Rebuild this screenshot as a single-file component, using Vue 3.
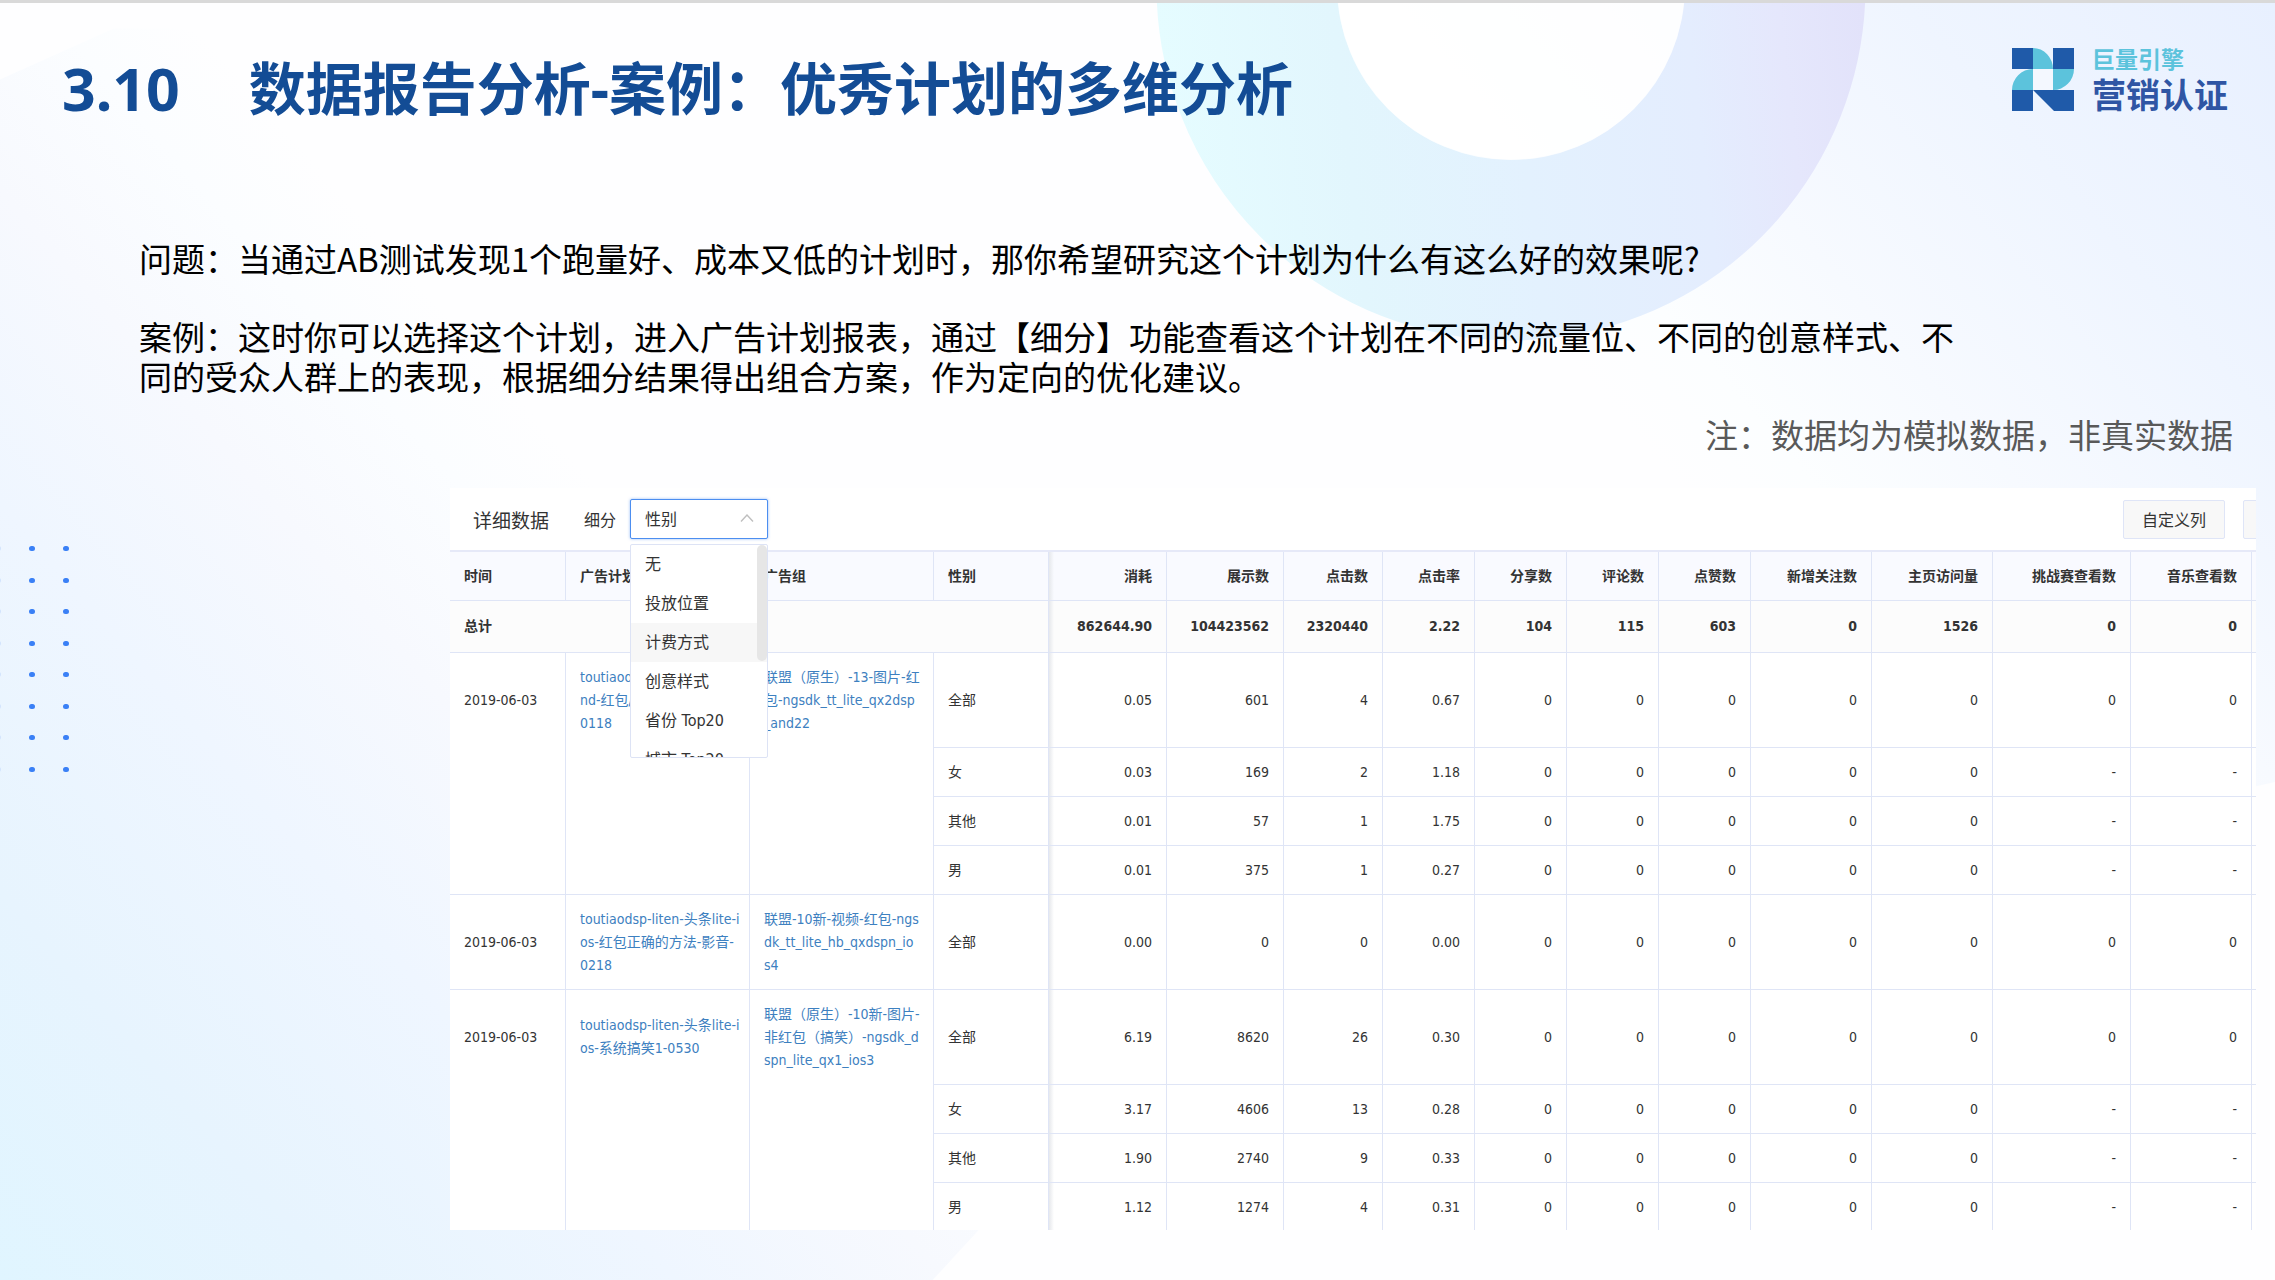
<script setup>
const columns = [
  { name: '时间', width: 116 },
  { name: '广告计划', width: 184 },
  { name: '广告组', width: 184 },
  { name: '性别', width: 115 },
  { name: '消耗', width: 118, number: true },
  { name: '展示数', width: 117, number: true },
  { name: '点击数', width: 99, number: true },
  { name: '点击率', width: 92, number: true },
  { name: '分享数', width: 92, number: true },
  { name: '评论数', width: 92, number: true },
  { name: '点赞数', width: 92, number: true },
  { name: '新增关注数', width: 121, number: true },
  { name: '主页访问量', width: 121, number: true },
  { name: '挑战赛查看数', width: 138, number: true },
  { name: '音乐查看数', width: 121, number: true },
]

const totals = ['862644.90', '104423562', '2320440', '2.22', '104', '115', '603', '0', '1526', '0', '0']

const zeros = ['0', '0', '0', '0', '0', '0', '0']
const dashes = ['0', '0', '0', '0', '0', '-', '-']

const groups = [
  {
    date: '2019-06-03',
    plan: ['toutiaodsp-liten-', 'nd-红包/', '0118'],
    group: ['联盟（原生）-13-图片-红', '包-ngsdk_tt_lite_qx2dsp', '_and22'],
    rows: [
      { label: '全部', values: ['0.05', '601', '4', '0.67', ...zeros] },
      { label: '女', values: ['0.03', '169', '2', '1.18', ...dashes] },
      { label: '其他', values: ['0.01', '57', '1', '1.75', ...dashes] },
      { label: '男', values: ['0.01', '375', '1', '0.27', ...dashes] },
    ],
  },
  {
    date: '2019-06-03',
    plan: ['toutiaodsp-liten-头条lite-i', 'os-红包正确的方法-影音-', '0218'],
    group: ['联盟-10新-视频-红包-ngs', 'dk_tt_lite_hb_qxdspn_io', 's4'],
    rows: [{ label: '全部', values: ['0.00', '0', '0', '0.00', ...zeros] }],
  },
  {
    date: '2019-06-03',
    plan: ['toutiaodsp-liten-头条lite-i', 'os-系统搞笑1-0530'],
    group: ['联盟（原生）-10新-图片-', '非红包（搞笑）-ngsdk_d', 'spn_lite_qx1_ios3'],
    rows: [
      { label: '全部', values: ['6.19', '8620', '26', '0.30', ...zeros] },
      { label: '女', values: ['3.17', '4606', '13', '0.28', ...dashes] },
      { label: '其他', values: ['1.90', '2740', '9', '0.33', ...dashes] },
      { label: '男', values: ['1.12', '1274', '4', '0.31', ...dashes] },
    ],
  },
]

const options = ['无', '投放位置', '计费方式', '创意样式', '省份 Top20', '城市 Top20']
const hovered = '计费方式'
</script>

<template>
  <div class="slide">
    <svg class="ring" width="710" height="338" viewBox="0 0 710 338" aria-hidden="true">
      <defs>
        <linearGradient id="ring-fill" gradientUnits="userSpaceOnUse" x1="0" y1="20" x2="700" y2="-60">
          <stop offset="0" stop-color="#e5fcff" />
          <stop offset="0.25" stop-color="#e2f6fd" />
          <stop offset="0.5" stop-color="#e3f1fe" />
          <stop offset="0.75" stop-color="#e4edfe" />
          <stop offset="0.88" stop-color="#e5e7fc" />
          <stop offset="1" stop-color="#e2e2fa" />
        </linearGradient>
      </defs>
      <circle cx="355" cy="-17" r="264" fill="none" stroke="url(#ring-fill)" stroke-width="181" />
      <circle cx="355" cy="-17" r="174" fill="#fff" fill-opacity="0.8" />
    </svg>

    <header class="head">
      <h1 class="title"><span class="index">3.10</span><span>数据报告分析-案例：优秀计划的多维分析</span></h1>
      <div class="brand">
        <svg class="mark" width="64" height="64" viewBox="0 0 64 64" aria-hidden="true">
          <path fill="#1f5aa9" d="M1 1h21v21H1zM42 1h21v21H42zM1 43h21v21H1zM22 43h41v21H43z" />
          <path fill="#5cc3dc" d="M22 1a20 21 0 0 1 20 21H22zM22 22v21H1a21 21 0 0 1 21-21zM42 22h21a21 21 0 0 1-21 21z" />
          <path fill="#f4f8ff" d="M22 22h20v21H22z" />
        </svg>
        <div class="words">
          <span class="small">巨量引擎</span>
          <span class="large">营销认证</span>
        </div>
      </div>
    </header>

    <section class="copy">
      <p>问题：当通过AB测试发现1个跑量好、成本又低的计划时，那你希望研究这个计划为什么有这么好的效果呢?</p>
      <p>案例：这时你可以选择这个计划，进入广告计划报表，通过【细分】功能查看这个计划在不同的流量位、不同的创意样式、不同的受众人群上的表现，根据细分结果得出组合方案，作为定向的优化建议。</p>
    </section>
    <p class="note">注：数据均为模拟数据，非真实数据</p>

    <div class="body">
      <div class="dots" aria-hidden="true"><i v-for="n in 24" :key="n" :class="{ faint: n % 3 === 1 }"></i></div>

      <section class="panel">
        <div class="toolbar">
          <h2>详细数据</h2>
          <label for="split">细分</label>
          <div class="picker">
            <select id="split"><option>性别</option></select>
            <svg class="caret" width="14" height="8" viewBox="0 0 14 8" aria-hidden="true">
              <path d="M1 7.500 7 1l6 6.500" fill="none" stroke="#bfbfbf" stroke-width="1.400" />
            </svg>
            <div class="menu">
              <ul>
                <li v-for="o in options" :key="o" :class="{ on: o === hovered }">{{ o }}</li>
              </ul>
              <span class="thumb"></span>
            </div>
          </div>
          <div class="actions">
            <button type="button">自定义列</button>
            <button type="button" aria-label="更多"></button>
          </div>
        </div>

        <table>
          <colgroup>
            <col v-for="c in columns" :key="c.name" :style="{ width: c.width + 'px' }" />
            <col />
          </colgroup>
          <thead>
            <tr>
              <th v-for="(c, i) in columns" :key="c.name" :class="{ num: c.number, edge: i === 4 }">{{ c.name }}</th>
              <th></th>
            </tr>
          </thead>
          <tbody>
            <tr class="total">
              <td colspan="4">总计</td>
              <td v-for="(t, i) in totals" :key="i" class="num" :class="{ edge: i === 0 }">{{ t }}</td>
              <td></td>
            </tr>
            <template v-for="(g, gi) in groups" :key="gi">
              <tr v-for="(r, ri) in g.rows" :key="gi + r.label" :class="{ tall: ri === 0 }">
                <template v-if="ri === 0">
                  <td :rowspan="g.rows.length" class="top"><div class="lead">{{ g.date }}</div></td>
                  <td :rowspan="g.rows.length" class="top">
                    <div class="lead"><a href="#"><span v-for="l in g.plan" :key="l">{{ l }}</span></a></div>
                  </td>
                  <td :rowspan="g.rows.length" class="top">
                    <div class="lead"><a href="#"><span v-for="l in g.group" :key="l">{{ l }}</span></a></div>
                  </td>
                </template>
                <td>{{ r.label }}</td>
                <td v-for="(v, i) in r.values" :key="i" class="num" :class="{ edge: i === 0 }">{{ v }}</td>
                <td></td>
              </tr>
            </template>
          </tbody>
        </table>
      </section>
    </div>
  </div>
</template>

<style>
body {
  margin: 0;
}
</style>

<style scoped>
.slide {
  position: relative;
  box-sizing: border-box;
  min-height: 100vh;
  overflow: hidden;
  border-top: 3px solid #d9d9d9;
  background: #fefeff;
  font-family: "Noto Sans CJK SC", sans-serif;
  color: #000;
}
.slide::before,
.slide::after {
  position: absolute;
  inset: 0;
  content: "";
}
.slide::before {
  background: linear-gradient(49deg, #e0f5ff 0%, #e7f4fe 10%, #eff6ff 20%, #f7f9fe 28%, #fbfdff 34%, #fefeff 38%);
  clip-path: polygon(0 6%, 5% 2%, 8% 2%, 73% 38%, 41% 100%, 0 100%);
}
.slide::after {
  z-index: 0;
  background: linear-gradient(229deg, #e8f0ff 0%, #eff5ff 11%, #f7faff 20%, #fcfeff 26%, rgba(254, 254, 255, 0) 30%);
  clip-path: polygon(50% 0, 100% 0, 100% 61%, 95% 63%, 50% 63%);
}
.ring {
  position: absolute;
  z-index: 1;
  top: 0;
  left: 1156px;
}
.head {
  position: relative;
  z-index: 2;
  display: flex;
  justify-content: space-between;
  align-items: flex-start;
  padding: 43px 47px 0 62px;
}
.title {
  display: flex;
  gap: 69px;
  margin: 0;
  font: 700 57px/84px "Noto Sans", "Noto Sans CJK SC", sans-serif;
  color: #134c95;
}
.index {
  font-size: 59px;
}
.brand {
  display: flex;
  gap: 17px;
  align-items: flex-start;
}
.mark {
  margin-top: 1px;
}
.words {
  display: flex;
  flex-direction: column;
  font-weight: 700;
}
.small {
  font-size: 23px;
  line-height: 24px;
  color: #5cc3dc;
}
.large {
  font-size: 34px;
  line-height: 48px;
  color: #2f55a4;
}
.copy {
  position: relative;
  z-index: 2;
  max-width: 1830px;
  margin: 108px 0 0 139px;
  font-size: 33px;
  line-height: 40px;
}
.copy p {
  margin: 0 0 38px;
}
.note {
  position: relative;
  z-index: 2;
  margin: -20px 42px 0 0;
  font-size: 33px;
  line-height: 40px;
  text-align: right;
  color: #595959;
}
.body {
  position: relative;
  z-index: 2;
  display: grid;
  grid-template-columns: 450px minmax(0, 1fr);
  padding: 34px 19px 50px 0;
}
.dots {
  display: grid;
  grid-template-columns: repeat(3, 6px);
  grid-auto-rows: 5px;
  column-gap: 28px;
  align-content: space-between;
  height: 226px;
  margin: 58px 0 0 -5px;
}
.dots i {
  border-radius: 3px;
  background: #3a80f6;
}
.dots .faint {
  background: #d3e4fd;
}
.panel {
  height: 742px;
  overflow: hidden;
  background: #fff;
  font-family: "DejaVu Sans Condensed", "Noto Sans CJK SC", sans-serif;
  color: #333;
}
.toolbar {
  display: flex;
  align-items: center;
  height: 62px;
  padding-left: 23px;
  font-size: 16px;
}
.toolbar h2 {
  margin: 0 35px 0 0;
  font-size: 19px;
  font-weight: 400;
}
.picker {
  position: relative;
  margin-left: 14px;
}
.picker select {
  display: block;
  appearance: none;
  width: 138px;
  height: 40px;
  padding: 0 14px;
  border: 1px solid #4c8ef0;
  border-radius: 2px;
  background: #fff;
  box-shadow: 0 0 3px rgba(76, 142, 240, 0.6);
  font: inherit;
  color: inherit;
}
.caret {
  position: absolute;
  top: 15px;
  right: 14px;
}
.menu {
  position: absolute;
  z-index: 2;
  top: 45px;
  left: 0;
  box-sizing: border-box;
  width: 138px;
  height: 214px;
  overflow: hidden;
  border: 1px solid #dde3f5;
  border-radius: 2px;
  background: #fff;
}
.menu ul {
  margin: 0;
  padding: 0;
  list-style: none;
}
.menu li {
  padding-left: 14px;
  line-height: 39px;
}
.menu .on {
  background: #f7f7f7;
}
.thumb {
  position: absolute;
  top: 0;
  right: 0;
  width: 10px;
  height: 116px;
  border-radius: 5px;
  background: #e6e6e6;
}
.actions {
  display: flex;
  gap: 18px;
  margin: 0 -89px 0 auto;
}
.actions button {
  width: 102px;
  height: 39px;
  padding: 0;
  border: 1px solid #dfe5f7;
  border-radius: 2px;
  background: #f8f8f8;
  font: inherit;
  color: inherit;
}
table {
  width: 100%;
  table-layout: fixed;
  border-collapse: separate;
  border-spacing: 0;
  border-top: 2px solid #e6e9f8;
  font-size: 14px;
  line-height: 23px;
}
th,
td {
  box-sizing: border-box;
  height: 49px;
  padding: 0 14px;
  border-right: 1px solid #dfe5f6;
  border-bottom: 1px solid #dfe5f6;
  text-align: left;
  white-space: nowrap;
}
th {
  background-color: #f9faff;
  font-weight: 700;
}
th:last-child,
td:last-child {
  padding: 0;
  border-right: 0;
}
.total td {
  height: 52px;
  background-color: #fcfcfc;
  font-weight: 700;
}
.tall td {
  height: 95px;
}
.num {
  text-align: right;
}
.edge {
  background-image: linear-gradient(90deg, #e6e8ec, rgba(255, 255, 255, 0) 5px);
}
.top {
  vertical-align: top;
}
.lead {
  display: flex;
  align-items: center;
  height: 94px;
}
.lead a {
  color: #3d80c0;
  text-decoration: none;
}
.lead span {
  display: block;
}
</style>
